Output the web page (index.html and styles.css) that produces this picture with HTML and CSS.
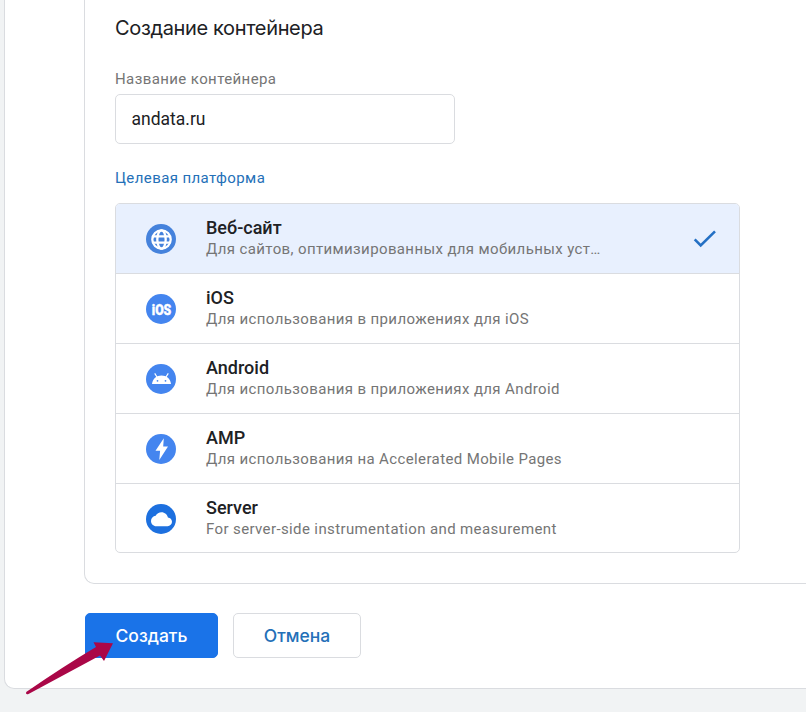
FILE: index.html
```
<!DOCTYPE html>
<html lang="ru">
<head>
<meta charset="utf-8">
<title>Создание контейнера</title>
<link rel="stylesheet" href="styles.css">
</head>
<body>
<main class="sheet">
  <section class="panel">
    <h1 class="heading">Создание контейнера</h1>
    <label class="label" for="name">Название контейнера</label>
    <input class="field" id="name" type="text" value="andata.ru">
    <div class="label label-active">Целевая платформа</div>
    <ul class="platforms">
      <li class="platform selected">
        <svg class="icon" viewBox="0 0 30 30"><circle cx="15" cy="15" r="15" fill="#4582dc"/><g fill="none" stroke="#fff" stroke-width="2.300"><circle cx="15.5" cy="15.5" r="9.2"/><ellipse cx="15.5" cy="15.5" rx="4.2" ry="9.2"/><path d="M6.8 12.300h17.4M6.8 18.700h17.4"/></g></svg>
        <div class="copy"><div class="name">Веб-сайт</div><div class="desc">Для сайтов, оптимизированных для мобильных уст…</div></div>
        <svg class="check" viewBox="0 0 24 18"><path d="M1.7 9.4l6 6L22 1.4" fill="none" stroke="#2470c4" stroke-width="2.6"/></svg>
      </li>
      <li class="platform">
        <svg class="icon" viewBox="0 0 30 30"><circle cx="15" cy="15" r="15" fill="#4485ef"/><text class="ios" x="5.8" y="20.8" textLength="19.5" lengthAdjust="spacingAndGlyphs">iOS</text></svg>
        <div class="copy"><div class="name">iOS</div><div class="desc">Для использования в приложениях для iOS</div></div>
      </li>
      <li class="platform">
        <svg class="icon" viewBox="0 0 30 30"><circle cx="15" cy="15" r="15" fill="#4485ef"/><path d="M11 13L8.700 9.400M20 13l2.300-3.600" fill="none" stroke="#fff" stroke-width="1.200"/><path d="M6 20c.5-5.200 4.500-8.500 9.500-8.500S24.500 14.800 25 20z" fill="#fff"/><circle cx="11.500" cy="16.800" r=".9" fill="#4485ef"/><circle cx="19.500" cy="16.800" r=".9" fill="#4485ef"/></svg>
        <div class="copy"><div class="name">Android</div><div class="desc">Для использования в приложениях для Android</div></div>
      </li>
      <li class="platform">
        <svg class="icon" viewBox="0 0 30 30"><circle cx="15" cy="15" r="15" fill="#4485ef"/><path d="M17.800 4.200L9.500 16.700h4.600l-.8 9.300 8.700-13.400h-4.800z" fill="#fff"/></svg>
        <div class="copy"><div class="name">AMP</div><div class="desc">Для использования на Accelerated Mobile Pages</div></div>
      </li>
      <li class="platform">
        <svg class="icon" viewBox="0 0 30 30"><circle cx="15" cy="15" r="15" fill="#1d70df"/><path transform="translate(5 4.700) scale(.875)" d="M19.350 10.040C18.670 6.590 15.640 4 12 4 9.110 4 6.600 5.640 5.350 8.040 2.340 8.360 0 10.910 0 14c0 3.310 2.690 6 6 6h13c2.760 0 5-2.240 5-5 0-2.640-2.050-4.780-4.650-4.960z" fill="#fff"/></svg>
        <div class="copy"><div class="name">Server</div><div class="desc">For server-side instrumentation and measurement</div></div>
      </li>
    </ul>
  </section>
  <div class="actions">
    <button class="btn primary" type="button">Создать</button>
    <button class="btn" type="button">Отмена</button>
  </div>
</main>
<svg class="pointer" viewBox="0 0 90 54"><path d="M1.200 50Q.3 53 3.500 52L75 13.500 79 19 88 1.200 68.500 .3 71 5Q39 24 1.200 50z" fill="#aa0747"/></svg>
</body>
</html>
```
FILE: styles.css
```
* { box-sizing: border-box; }

body {
  margin: 0;
  height: 712px;
  overflow: hidden;
  position: relative;
  background: #f1f3f4;
  color: #202124;
  font-family: Roboto, sans-serif;
}

.sheet {
  height: 689px;
  margin-left: 4px;
  padding-left: 80px;
  background: #fff;
  border: solid #dadce0;
  border-width: 0 0 1px 1px;
  border-bottom-left-radius: 10px;
}

.panel {
  height: 584px;
  margin-left: -1px;
  padding: 15px 0 0 30px;
  border: solid #dadce0;
  border-width: 0 0 1px 1px;
  border-bottom-left-radius: 10px;
}

.heading {
  margin: 0 0 31px;
  font: 400 20px/26px Inter, sans-serif;
  letter-spacing: -.35px;
}

.label {
  display: block;
  height: 13px;
  font-size: 15px;
  line-height: 1;
  letter-spacing: .4px;
  color: #757575;
}

.label-active { color: #2470b8; margin-bottom: 19px; }

.field {
  display: block;
  width: 340px;
  height: 50px;
  margin: 9px 0 27px;
  padding: 0 15.5px;
  border: 1px solid #dadce0;
  border-radius: 5px;
  font: 17.5px Roboto, sans-serif;
  color: #202124;
}

.platforms {
  width: 625px;
  margin: 0;
  padding: 0;
  list-style: none;
  border: 1px solid #dadce0;
  border-radius: 5px;
  overflow: hidden;
}

.platform {
  display: flex;
  align-items: center;
  height: 70px;
  padding: 0 22px 0 30px;
  border-bottom: 1px solid #dadce0;
}

.platform:last-child { border-bottom: 0; height: 68px; padding-top: 1px; }
.selected { background: #e8f0fe; }

.icon { width: 30px; height: 30px; margin-right: 30px; }
.ios { font: 900 15px Roboto, sans-serif; fill: #fff; stroke: #fff; stroke-width: .4px; }
.copy { flex: 1; white-space: nowrap; padding-bottom: 2px; }
.name { font-size: 18px; line-height: 22px; font-weight: 500; }
.desc { font-size: 15px; line-height: 20px; letter-spacing: .38px; color: #757575; }
.check { width: 24px; height: 18px; }

.actions { display: flex; gap: 15px; margin-top: 29px; }

.btn {
  width: 128px;
  height: 45px;
  padding: 0;
  border: 1px solid #dadce0;
  border-radius: 5px;
  background: #fff;
  color: #2470b8;
  font: 500 17.5px Inter, sans-serif;
}

.primary { width: 133px; background: #1a73e8; border-color: #1a73e8; color: #fff; }

.pointer {
  position: absolute;
  left: 25px;
  top: 642px;
  width: 90px;
  height: 54px;
}
```
